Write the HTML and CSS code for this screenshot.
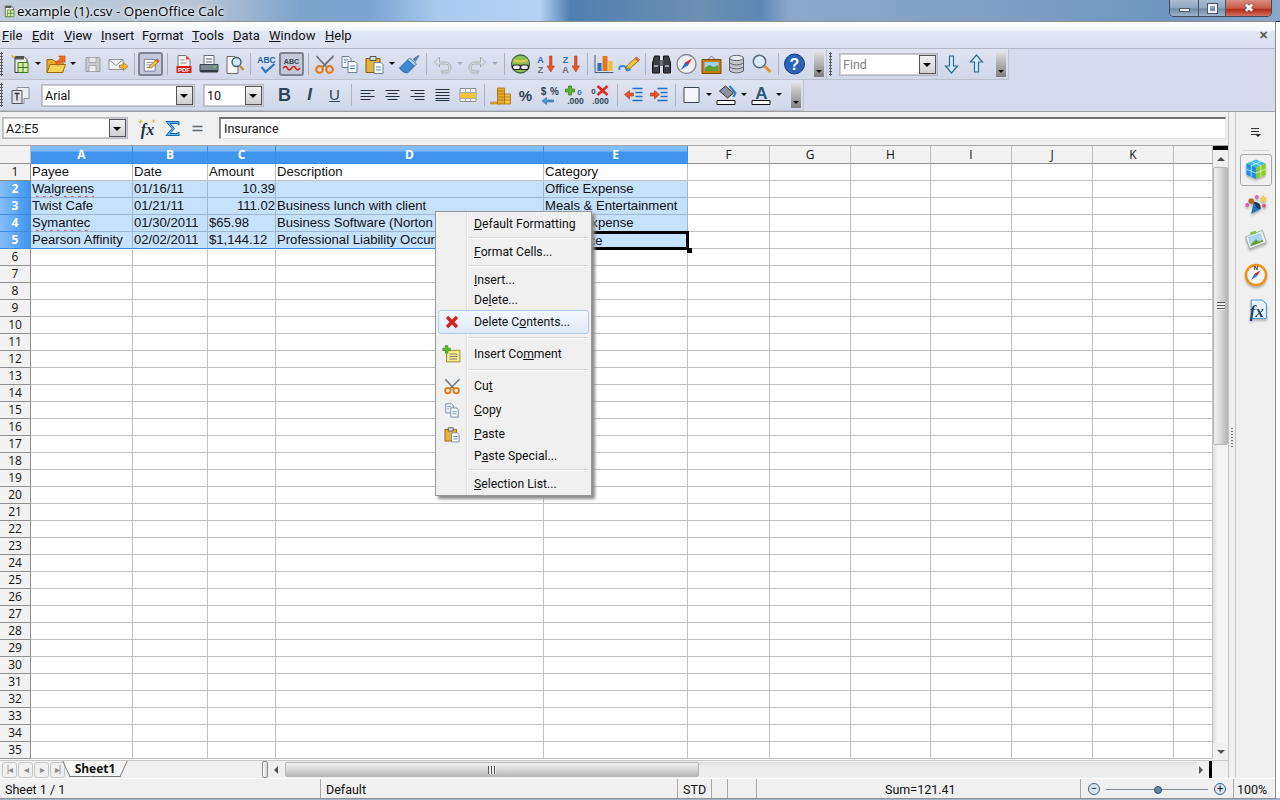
FILE: index.html
```html
<!DOCTYPE html>
<html lang="en">
<head>
    <meta charset="UTF-8">
    <title>example (1).csv - OpenOffice Calc</title>
    <link rel="stylesheet" href="styles.css">
</head>
<body>
<svg class="sprite" xmlns="http://www.w3.org/2000/svg">
    <symbol id="i-new" viewBox="0 0 24 24"><path d="M6.500 4.500h9l3 3v3h-3v10h-9z" fill="#f0f0e8" stroke="#3c3c3c"/><path d="M6.500 4.500h9v3h-9z" fill="#55585c"/><path d="M3 3l1.500 2.500L7 4" fill="none" stroke="#d9ae3a" stroke-width="1.200"/><path d="M9.500 10.500h10v10h-10z" fill="#d6eca8" stroke="#3f7d22"/><path d="M9.500 15.500h10M14.500 10.500v10" stroke="#3f7d22"/></symbol>
    <symbol id="i-open" viewBox="0 0 24 24"><path d="M3.500 7.500h6l2 2h8v11h-16z" fill="#e9a92a" stroke="#9a6a12"/><path d="M3.500 20.500l3-8h15.500l-3 8z" fill="#f8d15c" stroke="#9a6a12"/><path d="M12 11l5-5-2-2h6.500v6.500l-2-2-5 5z" fill="#ee6a1f" stroke="#b8430c" stroke-width=".6"/></symbol>
    <symbol id="i-save" viewBox="0 0 24 24"><path d="M5.500 5.500h13l1 1v13h-14z" fill="#c6c9cf" stroke="#9a9da4"/><path d="M8.500 5.500h7v5h-7z" fill="#e6e7ea" stroke="#a5a8ae"/><path d="M8.500 13.500h7v6h-7z" fill="#eceded" stroke="#a5a8ae"/></symbol>
    <symbol id="i-mail" viewBox="0 0 24 24"><path d="M3.500 7.500h14v10h-14z" fill="#f1f2f5" stroke="#8f939b"/><path d="M3.500 7.500l7 6 7-6" fill="none" stroke="#8f939b"/><path d="M14 13h4v-2.500l4.500 4-4.500 4V16h-4z" fill="#f2b431" stroke="#a8741a" stroke-width=".7"/></symbol>
    <symbol id="i-edit" viewBox="0 0 24 24"><path d="M4.500 6.500h13v14h-13z" fill="#fff" stroke="#5a6c8a"/><path d="M7 10h8M7 13h6M7 16h5" stroke="#5a84b5"/><path d="M10 17l1-3 9-8 2.500 2.500-9 8z" fill="#f4c23f" stroke="#8a5f14" stroke-width=".8"/><path d="M19 7l2.500 2.500" stroke="#d8502b" stroke-width="2"/></symbol>
    <symbol id="i-pdf" viewBox="0 0 24 24"><path d="M6.500 3.500h8l4 4v9h-12z" fill="#f3f3f3" stroke="#777"/><path d="M9 8h4M9 11h6" stroke="#8a8a8a"/><path d="M14.500 3.500l4 4h-4z" fill="#e34c3f"/><path d="M5 14h15v7H5z" fill="#d3201d"/><text x="12.500" y="20" class="ic-text" font-size="6" fill="#fff" text-anchor="middle">PDF</text></symbol>
    <symbol id="i-print" viewBox="0 0 24 24"><path d="M7.500 3.500h10v9h-10z" fill="#fafafa" stroke="#5f6b7a"/><path d="M9.500 7h6M9.500 10h6" stroke="#5f6b7a"/><path d="M3.500 12.500h18v7h-18z" fill="#7c8794" stroke="#3d4650"/><path d="M4 18h17v2.500H4z" fill="#2f3942"/><path d="M17 15h2" stroke="#5fd05f" stroke-width="2"/></symbol>
    <symbol id="i-preview" viewBox="0 0 24 24"><path d="M5.500 4.500h8l3 3v14h-11z" fill="#f8f8f8" stroke="#6b6b6b"/><circle cx="15" cy="10" r="4.500" fill="#cfe5f5" stroke="#3b5770" stroke-width="1.300"/><path d="M18 13.500l4 4.500" stroke="#c98f27" stroke-width="2.400"/></symbol>
    <symbol id="i-spell" viewBox="0 0 24 24"><text x="12" y="11" class="ic-text" font-size="8.500" fill="#1d5fa8" text-anchor="middle">ABC</text><path d="M7 15l4 5 9-8" fill="none" stroke="#2b78c8" stroke-width="2.200"/></symbol>
    <symbol id="i-autospell" viewBox="0 0 24 24"><text x="12" y="12" class="ic-text" font-size="8.500" fill="#3a4450" text-anchor="middle">ABC</text><path d="M2 17q3-4 5 0t5 0 5 0 5 0" fill="none" stroke="#d61f1f" stroke-width="2"/></symbol>
    <symbol id="i-cut" viewBox="0 0 24 24"><path d="M4 4l10 11M21 4L10 15" stroke="#6e7780" stroke-width="1.800"/><circle cx="7" cy="17.500" r="3.300" fill="none" stroke="#e57b14" stroke-width="2.200"/><circle cx="17" cy="17.500" r="3.300" fill="none" stroke="#e57b14" stroke-width="2.200"/></symbol>
    <symbol id="i-copy" viewBox="0 0 24 24"><path d="M4.500 4.500h7l2 2v9h-9z" fill="#f0f4f8" stroke="#6e7f92"/><path d="M10.500 9.500h7l2 2v9h-9z" fill="#fbfcfd" stroke="#6e7f92"/><path d="M6.500 8h4M6.500 10.500h2M12.500 14h5M12.500 16.500h5" stroke="#4f87bd"/></symbol>
    <symbol id="i-paste" viewBox="0 0 24 24"><path d="M3.500 6.500h14v14h-14z" fill="#e6b23a" stroke="#7d5c13"/><path d="M7.500 4.500h6v4h-6z" fill="#d7dbe0" stroke="#555"/><path d="M11.500 10.500h7l2 2v9h-9z" fill="#fbfcfd" stroke="#6e7f92"/><path d="M13.500 15h5M13.500 18h5" stroke="#4f87bd"/></symbol>
    <symbol id="i-brush" viewBox="0 0 24 24"><path d="M2 16l8-8 7 6-7 7q-5 0-8-5z" fill="#3f87d3" stroke="#1e5796" stroke-width=".8"/><path d="M10 8l2-2 7 6-2 2z" fill="#b9d5ef" stroke="#1e5796" stroke-width=".7"/><path d="M15 7l6-4 1 1-4 6z" fill="#5c80a8"/></symbol>
    <symbol id="i-undo" viewBox="0 0 24 24"><path d="M9 5L4 10l5 5v-3h6a3 3 0 010 7h-4v2h4a5.500 5.500 0 000-11H9z" fill="#dcdfe6" stroke="#a9adb5"/></symbol>
    <symbol id="i-redo" viewBox="0 0 24 24"><path d="M15 5l5 5-5 5v-3H9a3 3 0 000 7h4v2H9A5.500 5.500 0 019 10h6z" fill="#dcdfe6" stroke="#a9adb5"/></symbol>
    <symbol id="i-link" viewBox="0 0 24 24"><circle cx="12" cy="12" r="9" fill="#8fbf4d" stroke="#45604f" stroke-width="1.300"/><path d="M5 8q7 3 14 0" fill="none" stroke="#e2c84f" stroke-width="2"/><rect x="4" y="13" width="8" height="4.500" rx="2.200" fill="#eef" stroke="#222" stroke-width="1.200"/><rect x="12" y="13" width="8" height="4.500" rx="2.200" fill="#eef" stroke="#222" stroke-width="1.200"/></symbol>
    <symbol id="i-sortaz" viewBox="0 0 24 24"><text x="7" y="11" class="ic-text" font-size="9" fill="#1f6fc0" text-anchor="middle">A</text><text x="7" y="21" class="ic-text" font-size="9" fill="#6a7079" text-anchor="middle">Z</text><path d="M16 4h2.500v10H21l-3.700 6-3.800-6H16z" fill="#e8552a" stroke="#b73a14" stroke-width=".6"/></symbol>
    <symbol id="i-sortza" viewBox="0 0 24 24"><text x="7" y="11" class="ic-text" font-size="9" fill="#1f6fc0" text-anchor="middle">Z</text><text x="7" y="21" class="ic-text" font-size="9" fill="#6a7079" text-anchor="middle">A</text><path d="M16 4h2.500v10H21l-3.700 6-3.800-6H16z" fill="#e8552a" stroke="#b73a14" stroke-width=".6"/></symbol>
    <symbol id="i-chart" viewBox="0 0 24 24"><path d="M3.500 3v17.500H22" fill="none" stroke="#4a5a70"/><path d="M6 11h4v8H6z" fill="#2f6fc0"/><path d="M11 4h5v15h-5z" fill="#e8731f"/><path d="M17 9h4v10h-4z" fill="#efc02f"/></symbol>
    <symbol id="i-draw" viewBox="0 0 24 24"><path d="M3 18q-1-4 3-4t4 3 4 0" fill="none" stroke="#3a86cf" stroke-width="2"/><path d="M9 17l2-4 9-8 3 3-9 8z" fill="#f4c23f" stroke="#8a5f14" stroke-width=".8"/><path d="M19 6l3 3" stroke="#e2583e" stroke-width="2"/></symbol>
    <symbol id="i-find" viewBox="0 0 24 24"><path d="M3 11l2-7h5v17H3zM21 11l-2-7h-5v17h7z" fill="#3a3d42" stroke="#111"/><path d="M10 8h4v6h-4z" fill="#6b7078"/><path d="M4.500 14h4M15.500 14h4" stroke="#9aa0a8" stroke-width="2"/></symbol>
    <symbol id="i-nav" viewBox="0 0 24 24"><circle cx="12" cy="12" r="9.500" fill="#eef0f3" stroke="#848b94" stroke-width="1.300"/><path d="M18 6l-5 8-3-3z" fill="#d92b2b"/><path d="M6 18l5-8 3 3z" fill="#2b6fd9"/></symbol>
    <symbol id="i-gallery" viewBox="0 0 24 24"><path d="M2.500 7.500h19v14h-19z" fill="#c97c16" stroke="#7d4a08"/><path d="M5 10h14v9H5z" fill="#9cd0ee"/><path d="M5 16l5-3 4 2 5-2v6H5z" fill="#5f9e35"/><path d="M9 7l3-3 3 3" fill="none" stroke="#777"/></symbol>
    <symbol id="i-db" viewBox="0 0 24 24"><path d="M5 6v13q7 4 14 0V6z" fill="#c5c8cc" stroke="#5e6268"/><ellipse cx="12" cy="6" rx="7" ry="2.600" fill="#eaecee" stroke="#5e6268"/><path d="M5 11q7 4 14 0M5 15q7 4 14 0" fill="none" stroke="#5e6268"/></symbol>
    <symbol id="i-zoom" viewBox="0 0 24 24"><circle cx="10" cy="9.500" r="6.200" fill="#d7ebfa" stroke="#5a6c80" stroke-width="1.500"/><path d="M15 14l6 6" stroke="#d69a2c" stroke-width="3"/></symbol>
    <symbol id="i-help" viewBox="0 0 24 24"><circle cx="12" cy="12" r="10" fill="#2a62b8" stroke="#143e80"/><text x="12" y="18" class="ic-text" font-size="16" fill="#fff" text-anchor="middle">?</text></symbol>
    <symbol id="i-down" viewBox="0 0 24 24"><path d="M10 4h4v10h4l-6 7-6-7h4z" fill="#d6e9f7" stroke="#2f6a99" stroke-width="1.200"/></symbol>
    <symbol id="i-up" viewBox="0 0 24 24"><path d="M10 20h4V10h4l-6-7-6 7h4z" fill="#d6e9f7" stroke="#2f6a99" stroke-width="1.200"/></symbol>
    <symbol id="i-styles" viewBox="0 0 24 24"><path d="M8.500 4.500h12v11h-5v5h-7z" fill="#eef0f4" stroke="#8c9098"/><path d="M3.500 7.500h10v13h-10z" fill="#dfe2e8" stroke="#555"/><path d="M6 10.500h5M8.500 10.500v7" stroke="#333" stroke-width="1.300"/></symbol>
    <symbol id="i-aleft" viewBox="0 0 24 24"><path d="M5 7.500h14M5 10.500h10M5 13.500h14M5 16.500h10" stroke="#1f2f40"/></symbol>
    <symbol id="i-acenter" viewBox="0 0 24 24"><path d="M5 7.500h14M7 10.500h10M5 13.500h14M7 16.500h10" stroke="#1f2f40"/></symbol>
    <symbol id="i-aright" viewBox="0 0 24 24"><path d="M5 7.500h14M9 10.500h10M5 13.500h14M9 16.500h10" stroke="#1f2f40"/></symbol>
    <symbol id="i-ajust" viewBox="0 0 24 24"><path d="M5 6.500h14M5 9.500h14M5 12.500h14M5 15.500h14M5 17.500h14" stroke="#1f2f40"/></symbol>
    <symbol id="i-merge" viewBox="0 0 24 24"><path d="M4.500 5.500h16v13h-16z" fill="#f4f4f2" stroke="#8a8f96"/><path d="M4.500 9.500h16M4.500 15.500h16M10 5.500v4M15 5.500v4M10 15.500v3M15 15.500v3" stroke="#a5a9af"/><path d="M5 10h15v5H5z" fill="#f2c33c"/></symbol>
    <symbol id="i-coins" viewBox="0 0 24 24"><path d="M2 19h9v2H2z" fill="#e9a92a" stroke="#a36d10" stroke-width=".5"/><path d="M9 5h7v16H9z" fill="#e9a92a" stroke="#a36d10" stroke-width=".8"/><path d="M9 8h7M9 11h7M9 14h7M9 17h7" stroke="#a36d10" stroke-width=".7"/><path d="M16 11h6v10h-6z" fill="#f4c243" stroke="#a36d10" stroke-width=".8"/><path d="M16 14h6M16 17h6" stroke="#a36d10" stroke-width=".7"/></symbol>
    <symbol id="i-percent" viewBox="0 0 24 24"><text x="12" y="18" class="ic-text" font-size="15" fill="#2f4458" text-anchor="middle">%</text></symbol>
    <symbol id="i-dollar" viewBox="0 0 24 24"><text x="5" y="12" class="ic-text" font-size="10" fill="#2f4458" text-anchor="middle">$</text><text x="16" y="12" class="ic-text" font-size="10" fill="#2f4458" text-anchor="middle">%</text><path d="M15 17H8v-2.500L3.500 18 8 21.500V19h7z" fill="#4f9be0" stroke="#1e5f9e" stroke-width=".6"/></symbol>
    <symbol id="i-adddec" viewBox="0 0 24 24"><path d="M5 3h3v3h3v3H8v3H5V9H2V6h3z" fill="#5cb82a" stroke="#2f7a10" stroke-width=".7"/><text x="16" y="12" class="ic-text" font-size="8" fill="#1f6fc0" text-anchor="middle">0</text><text x="12" y="21" class="ic-text" font-size="8.500" fill="#2f4458" text-anchor="middle">.000</text></symbol>
    <symbol id="i-deldec" viewBox="0 0 24 24"><text x="5" y="11" class="ic-text" font-size="8" fill="#2f4458" text-anchor="middle">0</text><path d="M9 3l10 9M19 3L9 12" stroke="#e02a20" stroke-width="2.600"/><text x="12" y="21" class="ic-text" font-size="8.500" fill="#2f4458" text-anchor="middle">.000</text></symbol>
    <symbol id="i-outdent" viewBox="0 0 24 24"><path d="M11 5.500h10M14 9.500h7M14 13.500h7M11 17.500h10" stroke="#1f6fc0" stroke-width="1.500"/><path d="M3 11.500l5-4v2.500h4v3H8V16z" fill="#e8552a" stroke="#a83a12" stroke-width=".6"/></symbol>
    <symbol id="i-indent" viewBox="0 0 24 24"><path d="M11 5.500h10M14 9.500h7M14 13.500h7M11 17.500h10" stroke="#1f6fc0" stroke-width="1.500"/><path d="M13 11.500l-5-4v2.500H4v3h4V16z" fill="#e8552a" stroke="#a83a12" stroke-width=".6"/></symbol>
    <symbol id="i-border" viewBox="0 0 24 24"><path d="M4.500 4.500h15v15h-15z" fill="#f6f7fa" stroke="#3c4652"/></symbol>
    <symbol id="i-fill" viewBox="0 0 24 24"><path d="M5 8l6-5 8 7-6 5z" fill="#8a9098" stroke="#333"/><path d="M15 3l6 7-2 4" fill="none" stroke="#2f7ac0" stroke-width="2"/><path d="M2.500 17.500h18v4h-18z" fill="#fff" stroke="#111"/></symbol>
    <symbol id="i-fontcolor" viewBox="0 0 24 24"><text x="12" y="16" class="ic-text" font-size="17" fill="#2f5878" text-anchor="middle">A</text><path d="M2.500 17.500h18v4h-18z" fill="#fff" stroke="#111"/></symbol>
    <symbol id="i-fx" viewBox="0 0 24 24"><path d="M5 3l1 2 2 .5-2 .5-1 2-1-2-2-.500 2-.500zM18 3l.8 1.500 1.700.5-1.700.5-.8 1.500-.8-1.500-1.700-.5 1.700-.5z" fill="#e8b62c"/><text x="12" y="19" class="ic-fx" font-size="16" fill="#1f3348" text-anchor="middle">fx</text></symbol>
    <symbol id="i-sum" viewBox="0 0 24 24"><path d="M5.500 5.500h13v3.500l-2-1.500h-7l4.500 5-4.500 5h7l2-1.500v3.500h-13l6-7z" fill="#6fb6ec" stroke="#1268b3"/></symbol>
    <symbol id="i-equals" viewBox="0 0 24 24"><path d="M7 10.500h10M7 14.500h10" stroke="#5a6570" stroke-width="1.600"/></symbol>
    <symbol id="i-x" viewBox="0 0 24 24"><path d="M6 6l12 12M18 6L6 18" stroke="#d8201c" stroke-width="4"/></symbol>
    <symbol id="i-note" viewBox="0 0 24 24"><path d="M5.500 7.500h16v14h-16z" fill="#f7e98a" stroke="#8a7a20"/><path d="M9 12h9M9 15h9M9 18h9" stroke="#5a6c8a"/><path d="M4 2h3v3h3v3H7v3H4V8H1V5h3z" fill="#5cb82a" stroke="#2f7a10" stroke-width=".7"/></symbol>
    <symbol id="p-cube" viewBox="0 0 30 30"><path d="M15 2l12 5-12 5L3 7z" fill="#3cc0ea"/><path d="M3 7l12 5v14L3 21z" fill="#1b8fe8"/><path d="M15 12l12-5v14l-12 5z" fill="#8ccc28"/><path d="M9 4.500l12 5M21 4.500l-12 5M9 9.500v14M21 9.500v14M3 14l12 5 12-5" fill="none" stroke="#eaf6fb" stroke-width=".9"/></symbol>
    <symbol id="p-styles" viewBox="0 0 30 30"><path d="M9 26l3-15 9 9z" fill="#1f76c0"/><path d="M12 11a8 8 0 019 9l-5-1z" fill="#1a3a5a"/><circle cx="9" cy="10" r="3.500" fill="#b5651d"/><circle cx="16" cy="5" r="2.500" fill="#d66ad0"/><path d="M24 2l1.700 3.500 3.300.5-2.500 2.500.7 3.500-3.200-1.800L20.800 12l.7-3.500L19 6l3.300-.5z" fill="#f2cc4a"/><circle cx="4" cy="15" r="2.500" fill="#e85ba8"/><circle cx="25" cy="16" r="2.500" fill="#e8557a"/></symbol>
    <symbol id="p-gallery" viewBox="0 0 30 30"><path d="M2 11L23 3l5 15-21 8z" fill="#eef2f6" stroke="#9aa2ab"/><path d="M5 12l16-6 3 11-16 6z" fill="#a9d4f0"/><path d="M10 19l5-5 3 3 5-2 1 2-16 6z" fill="#6c9c30"/><path d="M8 7l7-2" stroke="#7ac43a" stroke-width="3"/></symbol>
    <symbol id="p-nav" viewBox="0 0 30 30"><circle cx="15" cy="15" r="12.500" fill="#f6f7f8" stroke="#ee8f16" stroke-width="3"/><path d="M21 9l-5 7.500-3-3z" fill="#d92b2b"/><path d="M9 21l4-7.500 3 3z" fill="#2b6fd9"/><text x="15" y="9" class="ic-text" font-size="7" fill="#222" text-anchor="middle">N</text></symbol>
    <symbol id="p-fx" viewBox="0 0 30 30"><path d="M9 2.500h14l5 5v18H9z" fill="#e9f3fb" stroke="#2a7fc8"/><text x="16" y="24" class="ic-fx" font-size="21" fill="#1f3f78" text-anchor="middle">fx</text></symbol>
</svg>

<header class="titlebar">
    <svg class="title-icon" viewBox="0 0 24 24"><use href="#i-new"/></svg>
    <span class="title-text">example (1).csv - OpenOffice Calc</span>
    <div class="window-btns">
        <div class="win-btn win-min"><span class="min-bar"></span></div>
        <div class="win-btn win-max"><span class="max-box"></span></div>
        <div class="win-btn win-close">&#10006;</div>
    </div>
</header>

<div class="app">
    <nav class="menubar">
        <span class="m-file"><u>F</u>ile</span>
        <span class="m-edit"><u>E</u>dit</span>
        <span class="m-view"><u>V</u>iew</span>
        <span class="m-insert"><u>I</u>nsert</span>
        <span class="m-format">F<u>o</u>rmat</span>
        <span class="m-tools"><u>T</u>ools</span>
        <span class="m-data"><u>D</u>ata</span>
        <span class="m-window"><u>W</u>indow</span>
        <span class="m-help"><u>H</u>elp</span>
        <span class="menu-close">&#10005;</span>
    </nav>

    <div class="toolbars">
        <div class="toolrow">
            <div class="bar">
                <i class="grip"></i>
                <svg class="ic"><use href="#i-new"/></svg><i class="drop"></i>
                <svg class="ic"><use href="#i-open"/></svg><i class="drop"></i>
                <i class="nudge"></i>
                <svg class="ic"><use href="#i-save"/></svg>
                <svg class="ic"><use href="#i-mail"/></svg>
                <i class="sep"></i>
                <svg class="ic on"><use href="#i-edit"/></svg>
                <i class="sep"></i>
                <svg class="ic"><use href="#i-pdf"/></svg>
                <svg class="ic"><use href="#i-print"/></svg>
                <svg class="ic"><use href="#i-preview"/></svg>
                <i class="sep"></i>
                <svg class="ic"><use href="#i-spell"/></svg>
                <svg class="ic on"><use href="#i-autospell"/></svg>
                <i class="sep"></i>
                <svg class="ic"><use href="#i-cut"/></svg>
                <svg class="ic"><use href="#i-copy"/></svg>
                <svg class="ic"><use href="#i-paste"/></svg><i class="drop"></i>
                <svg class="ic"><use href="#i-brush"/></svg>
                <i class="sep"></i>
                <svg class="ic"><use href="#i-undo"/></svg><i class="drop dim"></i>
                <svg class="ic"><use href="#i-redo"/></svg><i class="drop dim"></i>
                <i class="sep"></i>
                <svg class="ic"><use href="#i-link"/></svg>
                <svg class="ic"><use href="#i-sortaz"/></svg>
                <svg class="ic"><use href="#i-sortza"/></svg>
                <i class="sep"></i>
                <svg class="ic"><use href="#i-chart"/></svg>
                <svg class="ic"><use href="#i-draw"/></svg>
                <i class="sep"></i>
                <svg class="ic"><use href="#i-find"/></svg>
                <svg class="ic"><use href="#i-nav"/></svg>
                <svg class="ic"><use href="#i-gallery"/></svg>
                <svg class="ic"><use href="#i-db"/></svg>
                <svg class="ic"><use href="#i-zoom"/></svg>
                <i class="sep"></i>
                <svg class="ic"><use href="#i-help"/></svg>
                <i class="expander"></i>
            </div>
            <div class="bar bar-find">
                <i class="grip"></i>
                <div class="combo find-box"><span class="combo-text find-text">Find</span><span class="combo-btn"></span></div>
                <svg class="ic"><use href="#i-down"/></svg>
                <svg class="ic"><use href="#i-up"/></svg>
                <i class="expander"></i>
            </div>
        </div>
        <div class="toolrow">
            <div class="bar">
                <i class="grip"></i>
                <svg class="ic"><use href="#i-styles"/></svg>
                <div class="combo font-box"><span class="combo-text">Arial</span><span class="combo-btn"></span></div>
                <div class="combo size-box"><span class="combo-text">10</span><span class="combo-btn"></span></div>
                <span class="ic txt-b">B</span>
                <span class="ic txt-i">I</span>
                <span class="ic txt-u">U</span>
                <i class="sep"></i>
                <svg class="ic"><use href="#i-aleft"/></svg>
                <svg class="ic"><use href="#i-acenter"/></svg>
                <svg class="ic"><use href="#i-aright"/></svg>
                <svg class="ic"><use href="#i-ajust"/></svg>
                <svg class="ic"><use href="#i-merge"/></svg>
                <i class="sep"></i>
                <svg class="ic"><use href="#i-coins"/></svg>
                <svg class="ic"><use href="#i-percent"/></svg>
                <svg class="ic"><use href="#i-dollar"/></svg>
                <svg class="ic"><use href="#i-adddec"/></svg>
                <svg class="ic"><use href="#i-deldec"/></svg>
                <i class="sep"></i>
                <svg class="ic"><use href="#i-outdent"/></svg>
                <svg class="ic"><use href="#i-indent"/></svg>
                <i class="sep"></i>
                <svg class="ic"><use href="#i-border"/></svg><i class="drop"></i>
                <svg class="ic"><use href="#i-fill"/></svg><i class="drop"></i>
                <svg class="ic"><use href="#i-fontcolor"/></svg><i class="drop"></i>
                <i class="expander"></i>
            </div>
        </div>
    </div>

    <div class="workspace">
        <div class="doc">
            <div class="formula">
                <div class="combo name-box"><span class="combo-text">A2:E5</span><span class="combo-btn"></span></div>
                <svg class="ic"><use href="#i-fx"/></svg>
                <svg class="ic"><use href="#i-sum"/></svg>
                <svg class="ic"><use href="#i-equals"/></svg>
                <div class="input-line">Insurance</div>
            </div>
            <div class="sheet-row">
                <table class="grid">
                    <colgroup>
                        <col class="c-row"><col class="c-a"><col class="c-b"><col class="c-c"><col class="c-d"><col class="c-e"><col class="c-f"><col class="c-g"><col class="c-h"><col class="c-i"><col class="c-j"><col class="c-k"><col class="c-l">
                    </colgroup>
                    <thead>
                        <tr>
                            <th></th><th class="sel">A</th><th class="sel">B</th><th class="sel">C</th><th class="sel">D</th><th class="sel">E</th><th>F</th><th>G</th><th>H</th><th>I</th><th>J</th><th>K</th><th></th>
                        </tr>
                    </thead>
                    <tbody id="rows"></tbody>
                </table>
                <div class="vscroll">
                    <div class="v-black"></div>
                    <div class="sb-btn"><i class="tri-up"></i></div>
                    <div class="v-thumb"><span class="v-ridges"></span></div>
                    <div class="v-track"></div>
                    <div class="sb-btn"><i class="tri-down"></i></div>
                </div>
            </div>
            <div class="hbar">
                <div class="navs">
                    <span class="nav-btn">|&#9666;</span><span class="nav-btn">&#9666;</span><span class="nav-btn">&#9656;</span><span class="nav-btn">&#9656;|</span>
                </div>
                <div class="tabs"><span class="tab">Sheet1</span></div>
                <i class="tab-split"></i>
                <i class="tri-left"></i>
                <div class="h-thumb"><span class="h-ridges"></span></div>
                <div class="h-track"></div>
                <i class="tri-right"></i>
                <i class="h-black"></i>
            </div>
        </div>
        <div class="split"><i class="split-dots"></i></div>
        <aside class="sidebar">
            <div class="side-menu"><span class="side-lines"></span><i class="tri-down small"></i></div>
            <div class="side-rule"></div>
            <div class="side-btn active"><svg class="pic"><use href="#p-cube"/></svg></div>
            <div class="side-btn"><svg class="pic"><use href="#p-styles"/></svg></div>
            <div class="side-btn"><svg class="pic"><use href="#p-gallery"/></svg></div>
            <div class="side-btn"><svg class="pic"><use href="#p-nav"/></svg></div>
            <div class="side-btn"><svg class="pic"><use href="#p-fx"/></svg></div>
        </aside>
    </div>

    <footer class="status">
        <span class="st st-sheet">Sheet 1 / 1</span>
        <span class="st st-style">Default</span>
        <span class="st st-mode">STD</span>
        <span class="st st-blank1"></span>
        <span class="st st-blank2"></span>
        <span class="st st-sum">Sum=121.41</span>
        <span class="st st-zoom">
            <i class="zoom-btn">&minus;</i>
            <span class="zoom-line"><i class="zoom-thumb"></i></span>
            <i class="zoom-btn">+</i>
        </span>
        <span class="st st-pct">100%</span>
    </footer>

    <!-- right click menu -->
    <div class="ctx">
        <div class="ctx-item"><span><u>D</u>efault Formatting</span></div>
        <div class="ctx-sep"></div>
        <div class="ctx-item"><span><u>F</u>ormat Cells...</span></div>
        <div class="ctx-sep"></div>
        <div class="ctx-item"><span><u>I</u>nsert...</span></div>
        <div class="ctx-item"><span>De<u>l</u>ete...</span></div>
        <div class="ctx-item tall hover"><svg class="ctx-ic"><use href="#i-x"/></svg><span>Delete C<u>o</u>ntents...</span></div>
        <div class="ctx-sep"></div>
        <div class="ctx-item tall"><svg class="ctx-ic"><use href="#i-note"/></svg><span>Insert Co<u>m</u>ment</span></div>
        <div class="ctx-sep"></div>
        <div class="ctx-item tall"><svg class="ctx-ic"><use href="#i-cut"/></svg><span>Cu<u>t</u></span></div>
        <div class="ctx-item tall"><svg class="ctx-ic"><use href="#i-copy"/></svg><span><u>C</u>opy</span></div>
        <div class="ctx-item tall"><svg class="ctx-ic"><use href="#i-paste"/></svg><span><u>P</u>aste</span></div>
        <div class="ctx-item"><span>P<u>a</u>ste Special...</span></div>
        <div class="ctx-sep"></div>
        <div class="ctx-item"><span><u>S</u>election List...</span></div>
    </div>
</div>
<script src="script.js"></script>
</body>
</html>
```

FILE: styles.css
```css
* {
    box-sizing: border-box;
}
html, body {
    margin: 0;
    height: 800px;
    overflow: hidden;
}
body {
    font-family: Roboto, "Open Sans", sans-serif;
    font-size: 12.500px;
    color: #111;
    background: linear-gradient(#fff 798px, #9fb4cc 798px);
}
.sprite {
    display: none;
}
.ic-text {
    font-family: "Liberation Sans", sans-serif;
    font-weight: bold;
}
.ic-fx {
    font-family: "Liberation Serif", serif;
    font-style: italic;
    font-weight: bold;
}

/* title bar */
.titlebar {
    height: 22px;
    display: flex;
    align-items: center;
    padding-left: 1px;
    border-bottom: 1px solid #2b3a4a;
    background: linear-gradient(90deg, #c0ccd9 0, #b6c5d6 200px, #7ea3cb 300px, #7ba4d2 370px, #a9cbef 440px, #b5d3f3 540px, #4f7fb0 570px, #6d8fb3 700px, #5d87b4 760px, #8aa9ca 790px, #7f9fc3 1000px, #6f95c0 1170px, #8aa8c8 1280px);
}
.title-icon {
    width: 16px;
    height: 16px;
}
.title-text {
    font-family: "Open Sans", sans-serif;
    font-size: 13.400px;
    color: #000;
    text-shadow: 0 0 6px #fff, 0 0 3px #fff;
}
.window-btns {
    margin-left: auto;
    margin-right: 8px;
    margin-top: -4px;
    height: 17px;
    display: flex;
    border: 1px solid #3d4a5a;
    border-top: none;
    border-radius: 0 0 5px 5px;
    overflow: hidden;
}
.win-btn {
    display: flex;
    align-items: center;
    justify-content: center;
    border-left: 1px solid #46566a;
    background: linear-gradient(#a9bcd1, #8ea6c0 50%, #6f8aa6 55%, #9db3cb);
}
.win-min {
    width: 28px;
    border-left: none;
}
.win-max {
    width: 27px;
}
.win-close {
    width: 46px;
    color: #fff;
    font-size: 12px;
    text-shadow: 0 0 2px #333;
    background: linear-gradient(#d98f80, #c85a48 50%, #b52a1a 60%, #d0715f);
}
.min-bar {
    width: 11px;
    height: 4px;
    margin-top: 3px;
    background: #f2f4f6;
    border: 1px solid #4a5a6a;
}
.max-box {
    width: 9px;
    height: 9px;
    border: 2px solid #eef2f6;
    outline: 1px solid #4a5a6a;
}

/* main window */
.app {
    position: relative;
    width: 1275px;
    height: 776px;
    background: #f0f0f0;
    outline: 1px solid #8f8f8f;
}
.menubar {
    height: 27px;
    display: flex;
    align-items: flex-end;
    padding: 0 2px 3px;
    font-size: 13px;
    line-height: 18px;
    border-bottom: 1px solid #b4b8c8;
    background: linear-gradient(#fff 0, #f4f6fb 8px, #e0e5f3 10px, #dbe1f1 100%);
}
.menubar span {
    flex: none;
}
.m-file { width: 30px; }
.m-edit { width: 32px; }
.m-view { width: 37px; }
.m-insert { width: 41px; }
.m-format { width: 50px; }
.m-tools { width: 41px; }
.m-data { width: 36px; }
.m-window { width: 56px; }
.m-help { width: 40px; }
.menubar .menu-close {
    margin-left: auto;
    margin-right: 5px;
    color: #555;
    font-size: 11px;
    font-weight: bold;
}

.toolbars {
    border-bottom: 1px solid #9a9da6;
    background: #d5dbed;
}
.toolrow {
    height: 31px;
    display: flex;
}
.bar {
    display: flex;
    align-items: center;
    height: 31px;
    padding-right: 2px;
    border-right: 1px solid #c0c4d0;
    border-bottom: 1px solid #bcc0cd;
    background: linear-gradient(#e0e4f2, #d0d7ea);
}
.ic {
    flex: none;
    width: 25px;
    height: 24px;
    padding: 0 .5px;
}
svg.ic.on {
    background: #c3c9d9;
    border: 2px solid #7f8590;
    border-radius: 3px;
    padding: 0;
}
.grip {
    flex: none;
    width: 8px;
    height: 24px;
    background: radial-gradient(circle at 1.500px 1.500px, #606060 1px, transparent 1.200px) 0 0 / 3px 3px repeat-y;
}
.sep {
    flex: none;
    width: 8px;
    height: 22px;
    background: linear-gradient(#aab0c0, #aab0c0) center / 1px 100% no-repeat;
}
.nudge {
    flex: none;
    width: 2px;
}
.drop {
    flex: none;
    position: relative;
    width: 10px;
    height: 6px;
}
.drop::after {
    content: "";
    position: absolute;
    left: 2px;
    top: 1px;
    border: 3px solid transparent;
    border-top: 3px solid #111;
    border-bottom: none;
}
.drop.dim::after {
    border-top-color: #a5a9b3;
}
.expander {
    flex: none;
    position: relative;
    width: 10px;
    height: 25px;
    margin-left: 7px;
    background: linear-gradient(#dfdfdf, #7f7f7f);
}
.expander::after {
    content: "";
    position: absolute;
    left: 2px;
    bottom: 4px;
    border: 3px solid transparent;
    border-top: 3px solid #111;
    border-bottom: none;
}
.bar-find .grip {
    margin-left: 2px;
}
.find-box {
    width: 99px;
    margin: 0 1px 0 2px;
}
.bar-find .find-text {
    color: #808080;
}

/* combos */
.combo {
    flex: none;
    display: flex;
    height: 23px;
    background: #fff;
    border: 1px solid #b6b9c4;
    outline: 1px solid #c9ccd6;
    outline-offset: -2px;
}
.combo-text {
    flex: 1;
    padding-left: 3px;
    font-size: 12.500px;
    line-height: 21px;
}
.combo-btn {
    position: relative;
    width: 17px;
    margin: 1px;
    border: 1px solid #555;
    background: linear-gradient(#f2f2f2, #cfcfcf);
}
.combo-btn::after {
    content: "";
    position: absolute;
    left: 3px;
    top: 7px;
    border: 4px solid transparent;
    border-top: 4px solid #000;
    border-bottom: none;
}
.font-box {
    width: 154px;
    margin-left: 8px;
}
.size-box {
    width: 61px;
    margin: 0 8px;
}
.txt-b, .txt-i, .txt-u {
    text-align: center;
    font-family: "Liberation Sans", sans-serif;
    line-height: 24px;
    color: #2f4458;
}
.txt-b {
    font-weight: bold;
    font-size: 18px;
}
.txt-i {
    font-style: italic;
    font-weight: bold;
    font-size: 17px;
}
.txt-u {
    text-decoration: underline;
    font-size: 15px;
}

/* formula bar and sheet */
.workspace {
    display: flex;
    height: 666px;
}
.doc {
    width: 1229px;
    display: flex;
    flex-direction: column;
    border-right: 1px solid #c6c6c6;
}
.formula {
    height: 34px;
    display: flex;
    align-items: center;
    padding: 0 2px 1px;
    border-bottom: 1px solid #a8a8a8;
}
.name-box {
    width: 126px;
    height: 22px;
    margin-right: 7px;
}
.input-line {
    margin-left: 9px;
    width: 1007px;
    height: 22px;
    padding-left: 3px;
    line-height: 20px;
    background: #fff;
    border: 1px solid #e4e4e4;
    border-top: 2px solid #6f6f6f;
    border-left: 2px solid #8a8a8a;
}
.sheet-row {
    display: flex;
    height: 614px;
    overflow: hidden;
    background: #fff;
}
.grid {
    align-self: flex-start;
    width: 1213px;
    table-layout: fixed;
    border-collapse: separate;
    border-spacing: 0;
    background: #fff;
    font-family: "Liberation Sans", sans-serif;
    font-size: 13.100px;
}
.c-row { width: 31px; }
.c-a { width: 102px; }
.c-b { width: 75px; }
.c-c { width: 68px; }
.c-d { width: 268px; }
.c-e { width: 144px; }
.c-f { width: 82px; }
.c-g { width: 81px; }
.c-h { width: 80px; }
.c-i { width: 81px; }
.c-j { width: 81px; }
.c-k { width: 81px; }
.c-l { width: 39px; }
.grid th {
    height: 18px;
    padding: 0;
    font-weight: normal;
    font-size: 12px;
    font-family: "Open Sans", sans-serif;
    background: #f2f2f2;
    border-right: 1px solid #8f8f8f;
    border-bottom: 1px solid #8f8f8f;
}
.grid thead th {
    border-right-color: #bdbdbd;
}
.grid thead th.sel, .grid tbody th.sel {
    color: #fff;
    font-weight: bold;
    background: linear-gradient(#80bcfc, #80bcfc 5px, #3f95ee 6px, #3f95ee);
    border-color: #3f8ae0;
}
.grid tbody th {
    height: 17px;
    line-height: 16px;
}
.grid tbody th.sel {
    background: linear-gradient(90deg, #83bdfb, #3f95ee);
}
.grid td {
    height: 17px;
    line-height: 16px;
    padding: 0 1px;
    white-space: nowrap;
    overflow: hidden;
    border-right: 1px solid #c0c0c0;
    border-bottom: 1px solid #c0c0c0;
}
.grid td.sel {
    background: #c6e1fc;
    border-color: #9fb7d3;
}
.grid td.num {
    text-align: right;
    padding-right: 0;
}
.grid td.last-sel {
    border-bottom-color: #3f8ae0;
}
.grid td.bad {
    text-decoration: underline wavy #e0352b 1px;
    text-underline-offset: 2px;
}
.grid td.cursor {
    position: relative;
    overflow: visible;
    border: none;
    box-shadow: inset 0 0 0 2px #000, 0 0 0 1px #000;
}
.grid td.cursor::after {
    content: "";
    position: absolute;
    right: -4px;
    bottom: -4px;
    width: 5px;
    height: 5px;
    background: #000;
}

/* scrollbars */
.vscroll {
    width: 15px;
    display: flex;
    flex-direction: column;
    background: #f0f0f0;
}
.v-black {
    height: 4px;
    background: #000;
}
.sb-btn {
    flex: none;
    height: 17px;
    display: flex;
    align-items: center;
    justify-content: center;
}
.tri-up {
    border: 4px solid transparent;
    border-bottom: 4px solid #444;
    border-top: none;
}
.tri-down {
    border: 4px solid transparent;
    border-top: 4px solid #555;
    border-bottom: none;
}
.v-thumb {
    flex: none;
    height: 278px;
    display: flex;
    align-items: center;
    justify-content: center;
    border: 1px solid #b5b5b5;
    border-radius: 2px;
    background: linear-gradient(90deg, #f0f0f0, #dedede 40%, #b8b8b8);
}
.v-ridges {
    width: 8px;
    height: 8px;
    background: repeating-linear-gradient(#555 0 1px, #eee 1px 3px);
}
.v-track {
    flex: 1;
    background: linear-gradient(90deg, #dcdcdc, #f4f4f4 30%, #f4f4f4);
}
.hbar {
    height: 18px;
    display: flex;
    align-items: center;
    background: #f0f0f0;
    border-top: 1px solid #c9c9c9;
}
.navs {
    flex: none;
    width: 66px;
    display: flex;
    gap: 1px;
    padding-left: 2px;
}
.nav-btn {
    width: 15px;
    height: 16px;
    text-align: center;
    line-height: 14px;
    font-size: 10px;
    letter-spacing: -1px;
    color: #8a8a8a;
    border: 1px solid #c6c6c6;
    border-radius: 3px;
}
.tabs {
    flex: none;
    width: 196px;
    height: 17px;
}
.tab {
    position: relative;
    z-index: 0;
    display: inline-block;
    width: 58px;
    height: 16px;
    text-align: center;
    font-family: "Open Sans", sans-serif;
    font-weight: bold;
    font-size: 12px;
    line-height: 15px;
}
.tab::before, .tab::after {
    content: "";
    position: absolute;
    z-index: -1;
    top: 0;
    bottom: 0;
    width: 50%;
    background: #f8f8f8;
    border-bottom: 1px solid #777;
}
.tab::before {
    left: 0;
    border-left: 1px solid #777;
    transform: skewX(25deg);
}
.tab::after {
    right: 0;
    border-right: 1px solid #777;
    transform: skewX(-25deg);
}
.tab-split {
    flex: none;
    width: 6px;
    height: 17px;
    background: linear-gradient(90deg, #fff, #d0d0d0);
    border: 1px solid #8f8f8f;
    border-radius: 2px;
}
.tri-left {
    margin-left: 6px;
    border: 4px solid transparent;
    border-right: 4px solid #555;
    border-left: none;
}
.h-thumb {
    flex: none;
    margin-left: 7px;
    width: 414px;
    height: 15px;
    display: flex;
    align-items: center;
    justify-content: center;
    border: 1px solid #b5b5b5;
    border-radius: 2px;
    background: linear-gradient(#f0f0f0, #dedede 40%, #b8b8b8);
}
.h-ridges {
    width: 8px;
    height: 8px;
    background: repeating-linear-gradient(90deg, #555 0 1px, #eee 1px 3px);
}
.h-track {
    flex: 1;
    height: 15px;
    background: linear-gradient(#dcdcdc, #ededed 30%, #ededed);
}
.tri-right {
    margin: 0 6px 0 2px;
    border: 4px solid transparent;
    border-left: 4px solid #555;
    border-right: none;
}
.h-black {
    width: 3px;
    height: 17px;
    margin-right: 16px;
    background: #000;
}
.split {
    width: 7px;
    display: flex;
    align-items: center;
    justify-content: center;
    border-right: 1px solid #c6c6c6;
}
.split-dots {
    width: 2px;
    height: 20px;
    margin-top: -15px;
    background: repeating-linear-gradient(#777 0 1px, transparent 1px 3px);
}
.sidebar {
    flex: 1;
    display: flex;
    flex-direction: column;
    align-items: center;
    padding-top: 10px;
}
.side-menu {
    flex: none;
    width: 20px;
    height: 20px;
    display: flex;
    flex-direction: column;
    align-items: center;
    justify-content: center;
}
.side-lines {
    width: 8px;
    height: 7px;
    margin-left: -2px;
    background: repeating-linear-gradient(#333 0 1px, transparent 1px 3px);
}
.tri-down.small {
    margin: -1px 0 0 4px;
    border-width: 3px;
    border-top-color: #222;
    border-bottom: none;
}
.side-rule {
    width: 28px;
    height: 1px;
    margin: 8px 0 3px;
    background: #d8d8d8;
}
.side-btn {
    width: 32px;
    height: 32px;
    margin-bottom: 3px;
    display: flex;
    align-items: center;
    justify-content: center;
    border: 1px solid transparent;
}
.side-btn.active {
    border-color: #a9a9a9;
    border-radius: 3px;
}
.pic {
    width: 24px;
    height: 24px;
    filter: drop-shadow(0 2px 1px #b0b0b0);
}

/* status bar */
.status {
    height: 20px;
    display: flex;
    line-height: 18px;
    border-top: 1px solid #fff;
    box-shadow: 0 1px 0 #2b3a4a;
}
.st {
    flex: none;
    padding: 2px 0 0 5px;
    border-right: 1px solid #a8a8a8;
}
.st-sheet { width: 321px; }
.st-style { width: 357px; }
.st-mode { width: 34px; }
.st-blank1 { width: 16px; }
.st-blank2 { width: 29px; }
.st-sum { width: 324px; padding-left: 128px; }
.st-zoom {
    width: 153px;
    padding: 1px 7px 0;
    display: flex;
    align-items: center;
    gap: 3px;
}
.st-pct {
    border: none;
    padding-left: 3px;
}
.zoom-btn {
    flex: none;
    width: 12px;
    height: 12px;
    border-radius: 50%;
    border: 1px solid #3a6080;
    background: #d9e6f1;
    text-align: center;
    font-style: normal;
    font-size: 11px;
    line-height: 9px;
}
.zoom-line {
    position: relative;
    flex: 1;
    margin: 0 3px;
    height: 1px;
    background: #7f8a96;
}
.zoom-thumb {
    position: absolute;
    left: 48px;
    top: -3px;
    width: 8px;
    height: 8px;
    border-radius: 50%;
    background: #5f86a8;
    border: 1px solid #2f4f6a;
}

/* context menu */
.ctx {
    position: absolute;
    left: 435px;
    top: 189px;
    width: 157px;
    height: 285px;
    padding: 2px;
    font-size: 12.200px;
    background: linear-gradient(90deg, #f0f0f0 30px, #e2e3e3 30px, #e2e3e3 31px, #fff 31px, #fff 32px, #f0f0f0 32px);
    border: 1px solid #979797;
    box-shadow: 3px 3px 3px #8a8a8a;
}
.ctx-item {
    position: relative;
    height: 20px;
    display: flex;
    align-items: center;
    padding-left: 35px;
    border: 1px solid transparent;
    border-radius: 3px;
}
.ctx-item.tall {
    height: 24px;
}
.ctx-item.hover {
    border-color: #aeccec;
    background: linear-gradient(#f4f8fd, #dfeaf7);
}
.ctx-ic {
    position: absolute;
    left: 3px;
    top: 1px;
    width: 20px;
    height: 20px;
}
.ctx-sep {
    height: 8px;
    margin-left: 30px;
    background: linear-gradient(#dcdcdc, #dcdcdc) 0 3px / 100% 1px no-repeat, linear-gradient(#fff, #fff) 0 4px / 100% 1px no-repeat;
}
```

FILE: script.js
```js
// sheet contents, first row is the csv header
const DATA = [
    ['Payee', 'Date', 'Amount', 'Description', 'Category'],
    ['Walgreens', '01/16/11', '10.39', '', 'Office Expense'],
    ['Twist Cafe', '01/21/11', '111.02', 'Business lunch with client', 'Meals & Entertainment'],
    ['Symantec', '01/30/2011', '$65.98', 'Business Software (Norton Antivirus)', 'Office Expense'],
    ['Pearson Affinity', '02/02/2011', '$1,144.12', 'Professional Liability Occurrence', 'Insurance']
];
const MISSPELT = ['Walgreens', 'Symantec'];
const COLUMNS = 12;

let html = '';
for (let r = 1; r <= 35; r++) {
    const row = DATA[r - 1] || [];
    const selected = r >= 2 && r <= 5;
    html += `<tr><th class="${selected ? 'sel' : ''}">${r}</th>`;
    for (let c = 0; c < COLUMNS; c++) {
        const text = row[c] || '';
        const cls = [];
        if (selected && c < 5) cls.push('sel');
        if (r === 5 && c < 5) cls.push('last-sel');
        if (r === 5 && c === 4) cls.push('cursor');
        if (/^[0-9.]+$/.test(text)) cls.push('num');
        if (MISSPELT.includes(text)) cls.push('bad');
        html += `<td class="${cls.join(' ')}">${text.replace('&', '&amp;')}</td>`;
    }
    html += '</tr>';
}
document.getElementById('rows').innerHTML = html;
```
